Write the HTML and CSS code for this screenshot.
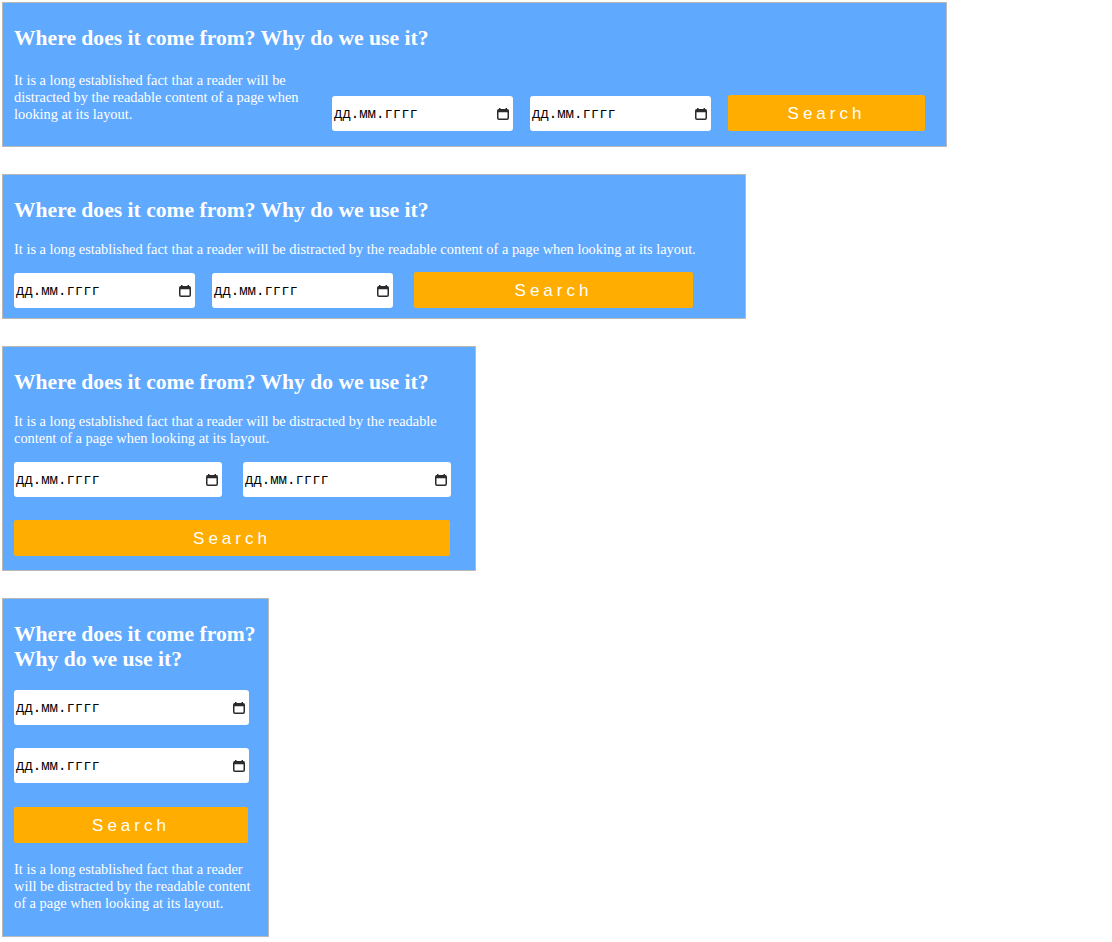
FILE: index.html
```html
<!DOCTYPE html>
<html lang="ru">
<head>
<meta charset="utf-8">
<title>Search cards</title>
<link rel="stylesheet" href="styles.css">
</head>
<body>

<section class="card card--xl">
  <h2 class="card__title">Where does it come from? Why do we use it?</h2>
  <div class="card__row">
    <p class="card__text card__text--side">It is a long established fact that a reader will be distracted by the readable content of a page when looking at its layout.</p>
    <div class="controls controls--xl">
      <label class="date"><span class="date__text">дд.мм.гггг</span><svg class="date__icon" width="12" height="12" viewBox="0 0 12 12"><rect x="0.75" y="1.75" width="10.5" height="9.5" rx="1.2" fill="none" stroke="#2b2b2b" stroke-width="1.5"/><rect x="0.75" y="1.75" width="10.5" height="2.5" fill="#2b2b2b"/><rect x="2" y="0" width="1.5" height="2.5" fill="#2b2b2b"/><rect x="8.5" y="0" width="1.5" height="2.5" fill="#2b2b2b"/></svg></label>
      <label class="date"><span class="date__text">дд.мм.гггг</span><svg class="date__icon" width="12" height="12" viewBox="0 0 12 12"><rect x="0.75" y="1.75" width="10.5" height="9.5" rx="1.2" fill="none" stroke="#2b2b2b" stroke-width="1.5"/><rect x="0.75" y="1.75" width="10.5" height="2.5" fill="#2b2b2b"/><rect x="2" y="0" width="1.5" height="2.5" fill="#2b2b2b"/><rect x="8.5" y="0" width="1.5" height="2.5" fill="#2b2b2b"/></svg></label>
      <button class="search">Search</button>
    </div>
  </div>
</section>

<section class="card card--lg">
  <h2 class="card__title">Where does it come from? Why do we use it?</h2>
  <p class="card__text">It is a long established fact that a reader will be distracted by the readable content of a page when looking at its layout.</p>
  <div class="controls controls--lg">
    <label class="date"><span class="date__text">дд.мм.гггг</span><svg class="date__icon" width="12" height="12" viewBox="0 0 12 12"><rect x="0.75" y="1.75" width="10.5" height="9.5" rx="1.2" fill="none" stroke="#2b2b2b" stroke-width="1.5"/><rect x="0.75" y="1.75" width="10.5" height="2.5" fill="#2b2b2b"/><rect x="2" y="0" width="1.5" height="2.5" fill="#2b2b2b"/><rect x="8.5" y="0" width="1.5" height="2.5" fill="#2b2b2b"/></svg></label>
    <label class="date"><span class="date__text">дд.мм.гггг</span><svg class="date__icon" width="12" height="12" viewBox="0 0 12 12"><rect x="0.75" y="1.75" width="10.5" height="9.5" rx="1.2" fill="none" stroke="#2b2b2b" stroke-width="1.5"/><rect x="0.75" y="1.75" width="10.5" height="2.5" fill="#2b2b2b"/><rect x="2" y="0" width="1.5" height="2.5" fill="#2b2b2b"/><rect x="8.5" y="0" width="1.5" height="2.5" fill="#2b2b2b"/></svg></label>
    <button class="search">Search</button>
  </div>
</section>

<section class="card card--md">
  <h2 class="card__title">Where does it come from? Why do we use it?</h2>
  <p class="card__text">It is a long established fact that a reader will be distracted by the readable content of a page when looking at its layout.</p>
  <div class="controls controls--md">
    <label class="date"><span class="date__text">дд.мм.гггг</span><svg class="date__icon" width="12" height="12" viewBox="0 0 12 12"><rect x="0.75" y="1.75" width="10.5" height="9.5" rx="1.2" fill="none" stroke="#2b2b2b" stroke-width="1.5"/><rect x="0.75" y="1.75" width="10.5" height="2.5" fill="#2b2b2b"/><rect x="2" y="0" width="1.5" height="2.5" fill="#2b2b2b"/><rect x="8.5" y="0" width="1.5" height="2.5" fill="#2b2b2b"/></svg></label>
    <label class="date"><span class="date__text">дд.мм.гггг</span><svg class="date__icon" width="12" height="12" viewBox="0 0 12 12"><rect x="0.75" y="1.75" width="10.5" height="9.5" rx="1.2" fill="none" stroke="#2b2b2b" stroke-width="1.5"/><rect x="0.75" y="1.75" width="10.5" height="2.5" fill="#2b2b2b"/><rect x="2" y="0" width="1.5" height="2.5" fill="#2b2b2b"/><rect x="8.5" y="0" width="1.5" height="2.5" fill="#2b2b2b"/></svg></label>
    <button class="search">Search</button>
  </div>
</section>

<section class="card card--sm">
  <h2 class="card__title">Where does it come from? Why do we use it?</h2>
  <div class="controls controls--sm">
    <label class="date"><span class="date__text">дд.мм.гггг</span><svg class="date__icon" width="12" height="12" viewBox="0 0 12 12"><rect x="0.75" y="1.75" width="10.5" height="9.5" rx="1.2" fill="none" stroke="#2b2b2b" stroke-width="1.5"/><rect x="0.75" y="1.75" width="10.5" height="2.5" fill="#2b2b2b"/><rect x="2" y="0" width="1.5" height="2.5" fill="#2b2b2b"/><rect x="8.5" y="0" width="1.5" height="2.5" fill="#2b2b2b"/></svg></label>
    <label class="date"><span class="date__text">дд.мм.гггг</span><svg class="date__icon" width="12" height="12" viewBox="0 0 12 12"><rect x="0.75" y="1.75" width="10.5" height="9.5" rx="1.2" fill="none" stroke="#2b2b2b" stroke-width="1.5"/><rect x="0.75" y="1.75" width="10.5" height="2.5" fill="#2b2b2b"/><rect x="2" y="0" width="1.5" height="2.5" fill="#2b2b2b"/><rect x="8.5" y="0" width="1.5" height="2.5" fill="#2b2b2b"/></svg></label>
    <button class="search">Search</button>
  </div>
  <p class="card__text card__text--bottom">It is a long established fact that a reader will be distracted by the readable content of a page when looking at its layout.</p>
</section>

</body>
</html>
```

FILE: styles.css
```css
* { box-sizing: border-box; }

body {
  margin: 2px;
  background: #fff;
  font-family: "Liberation Serif", "Times New Roman", serif;
}

.card {
  background: #5fa9fe;
  border: 1px solid #b9b9b9;
  color: #fff;
  padding: 23px 18px 9px 11px;
  margin-bottom: 27px;
}

.card--xl { width: 945px; padding-bottom: 15px; }
.card--lg { width: 744px; padding-bottom: 10px; }
.card--md { width: 474px; padding-bottom: 14px; }
.card--sm { width: 267px; padding-right: 10px; padding-bottom: 24px; }

.card__title {
  margin: 0;
  font-size: 21.6px;
  line-height: 24px;
  font-weight: bold;
}

.card--sm .card__title { line-height: 25px; }

.card__text {
  margin: 19px 0 0;
  font-size: 14.4px;
  line-height: 17px;
}

.card__row {
  display: flex;
  align-items: flex-start;
  margin-top: 22px;
}

.card__text--side {
  margin: 0 18px 0 0;
  width: 300px;
  flex: none;
}

.card__text--bottom { margin-top: 18px; }

.controls { display: flex; align-items: flex-start; }

.controls--xl { margin-top: 23px; gap: 17px; }
.controls--xl .date { width: 181px; margin-top: 1px; }
.controls--xl .search { width: 197px; }

.controls--lg { margin-top: 14px; gap: 17px; }
.controls--lg .date { width: 181px; margin-top: 1px; }
.controls--lg .search { width: 279px; margin-left: 4px; }

.controls--md {
  display: grid;
  grid-template-columns: 208px 208px;
  column-gap: 21px;
  row-gap: 23px;
  margin-top: 15px;
}
.controls--md .search { grid-column: 1 / 3; width: 436px; }

.controls--sm {
  flex-direction: column;
  gap: 23px;
  margin-top: 18px;
}
.controls--sm .date { width: 235px; }
.controls--sm .search { width: 234px; margin-top: 1px; }

.date {
  display: flex;
  align-items: center;
  justify-content: space-between;
  height: 35px;
  background: #fff;
  border-radius: 3px;
  padding: 0 4px 0 2px;
  color: #000;
}

.date__text {
  font-family: "Liberation Mono", "DejaVu Sans Mono", monospace;
  font-size: 14px;
  margin-top: 1px;
}

.date__icon { flex: none; }

.search {
  height: 36px;
  border: 0;
  border-radius: 2px;
  background: #ffad00;
  color: #fff;
  font-family: "Liberation Sans", Arial, sans-serif;
  font-size: 17px;
  letter-spacing: 4px;
  padding: 1px 0 0;
}
```
